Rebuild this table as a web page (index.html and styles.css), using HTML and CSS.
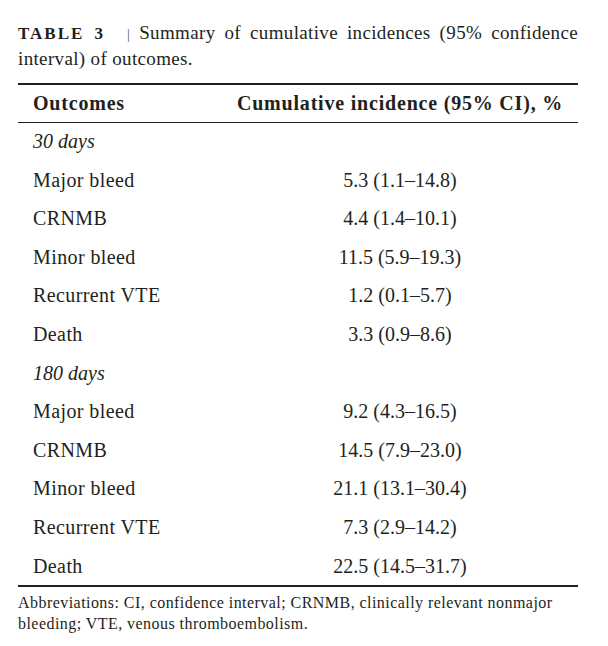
FILE: index.html
```html
<!DOCTYPE html>
<html lang="en">
<head>
<meta charset="utf-8">
<title>Table 3</title>
<link rel="stylesheet" href="styles.css">
</head>
<body>
<div class="page">
  <p class="caption"><span class="label">TABLE 3</span><span class="sep">|</span> <span class="cap-line">Summary of cumulative incidences (95% confidence</span> <span class="cap-line">interval) of outcomes.</span></p>
  <table class="data">
    <colgroup><col class="c1"><col class="c2"></colgroup>
    <thead>
      <tr><th class="lbl">Outcomes</th><th class="val">Cumulative incidence (95% CI), %</th></tr>
    </thead>
    <tbody>
      <tr><td class="lbl grp">30 days</td><td class="val"></td></tr>
      <tr><td class="lbl">Major bleed</td><td class="val">5.3 (1.1–14.8)</td></tr>
      <tr><td class="lbl">CRNMB</td><td class="val">4.4 (1.4–10.1)</td></tr>
      <tr><td class="lbl">Minor bleed</td><td class="val">11.5 (5.9–19.3)</td></tr>
      <tr><td class="lbl">Recurrent VTE</td><td class="val">1.2 (0.1–5.7)</td></tr>
      <tr><td class="lbl">Death</td><td class="val">3.3 (0.9–8.6)</td></tr>
      <tr><td class="lbl grp">180 days</td><td class="val"></td></tr>
      <tr><td class="lbl">Major bleed</td><td class="val">9.2 (4.3–16.5)</td></tr>
      <tr><td class="lbl">CRNMB</td><td class="val">14.5 (7.9–23.0)</td></tr>
      <tr><td class="lbl">Minor bleed</td><td class="val">21.1 (13.1–30.4)</td></tr>
      <tr><td class="lbl">Recurrent VTE</td><td class="val">7.3 (2.9–14.2)</td></tr>
      <tr><td class="lbl">Death</td><td class="val">22.5 (14.5–31.7)</td></tr>
    </tbody>
  </table>
  <p class="note">Abbreviations: CI, confidence interval; CRNMB, clinically relevant nonmajor bleeding; VTE, venous thromboembolism.</p>
</div>
</body>
</html>
```
FILE: styles.css
```css
html, body {
  margin: 0;
  padding: 0;
  background: #ffffff;
}

body {
  color: #231f20;
  font-family: "Liberation Serif", "Times New Roman", serif;
}

.page {
  width: 560px;
  padding: 19.6px 30px 0 18px;
}

.caption {
  margin: 0;
  font-size: 19px;
  line-height: 26.5px;
  letter-spacing: 0.35px;
  text-align: justify;
}

.label {
  font-weight: bold;
  font-size: 17px;
  letter-spacing: 2px;
  line-height: 1;
}

.sep {
  display: inline-block;
  margin: 0 0 0 22px;
  font-size: 14px;
  line-height: 1;
  color: #555555;
}

.data {
  margin-top: 10.4px;
  width: 560px;
  table-layout: fixed;
  border-collapse: separate;
  border-spacing: 0;
  border-top: 2px solid #231f20;
  border-bottom: 2px solid #231f20;
  font-size: 20px;
}

.c1 { width: 204px; }
.c2 { width: 356px; }

.data th {
  padding: 0;
  font-weight: bold;
  line-height: 37px;
  letter-spacing: 0.8px;
  border-bottom: 1px solid #231f20;
}

.data td {
  padding: 0 0 2.6px 0;
  line-height: 36px;
}

.data tbody tr:last-child td {
  padding-bottom: 1.4px;
}

.data .lbl {
  text-align: left;
  padding-left: 15px;
}

.data td.lbl {
  letter-spacing: 0.4px;
}

.data .val {
  text-align: center;
}

.data td.grp {
  font-style: italic;
  letter-spacing: 0;
}

.note {
  margin: 6.2px 0 0 0;
  font-size: 16px;
  line-height: 20.7px;
  letter-spacing: 0.45px;
}
```
